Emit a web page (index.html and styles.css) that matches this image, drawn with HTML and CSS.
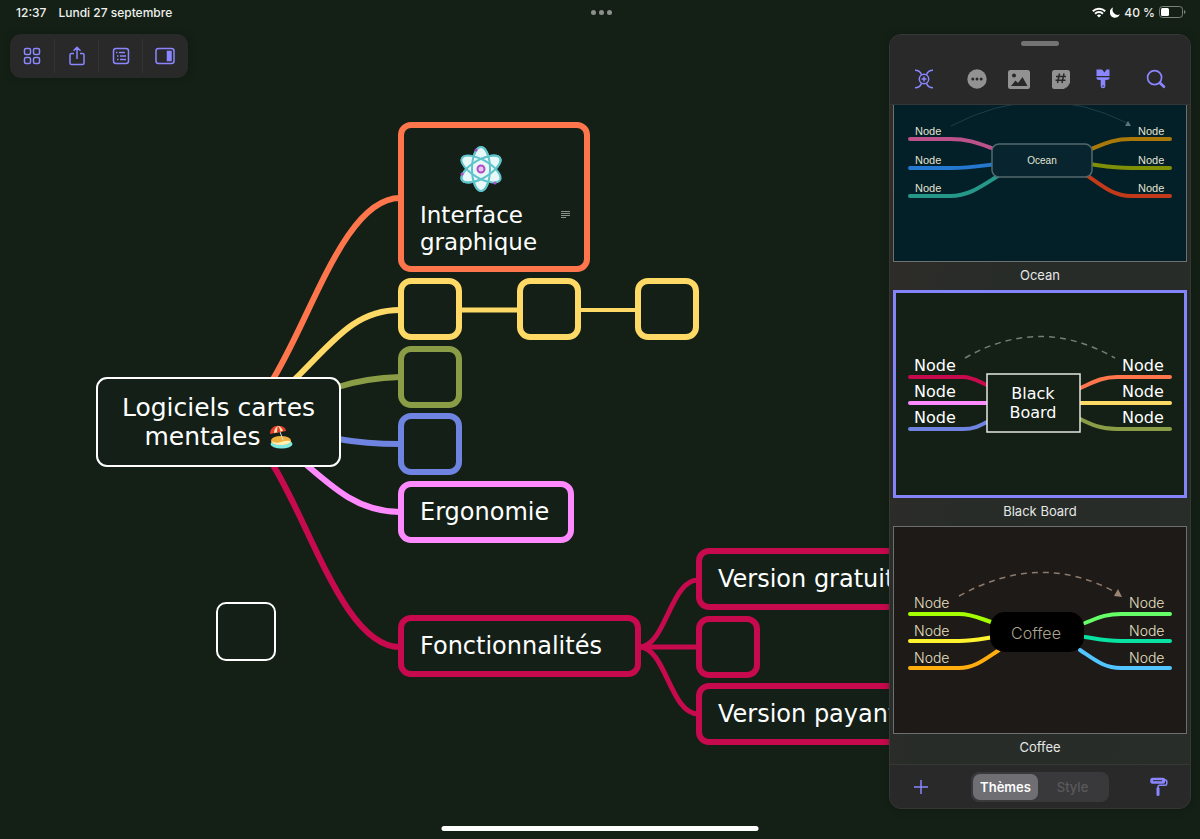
FILE: index.html
```html
<!DOCTYPE html>
<html lang="fr">
<head>
<meta charset="utf-8">
<title>Logiciels cartes mentales</title>
<link rel="stylesheet" href="styles.css">
</head>
<body>
<div class="app">
  <header class="status">
    <div class="status-side"><time>12:37</time><span>Lundi 27 septembre</span></div>
    <button class="dots" aria-label="Multitâche"><i></i><i></i><i></i></button>
    <div class="status-side status-end">
      <svg width="14" height="11" viewBox="0 0 14 11" fill="none" stroke="#fff" stroke-width="2"><path d="M.8 4.3a8.8 8.8 0 0 1 12.4 0M3.1 6.7a5.5 5.5 0 0 1 7.8 0"/><path d="M7 10.6 4.9 8.5a3 3 0 0 1 4.2 0z" fill="#fff" stroke="none"/></svg>
      <svg width="10" height="11" viewBox="0 0 10 11"><path d="M3.1.6A5.2 5.2 0 1 0 9.8 7.3 5 5 0 0 1 3.1.6z" fill="#fff"/></svg>
      <span>40 %</span>
      <svg width="27" height="12" viewBox="0 0 27 12"><rect x=".5" y=".5" width="23" height="11" rx="3" fill="none" stroke="#7b827c"/><rect x="2" y="2" width="8" height="8" rx="1.5" fill="#fff"/><path d="M25 4v4q1.5-.6 1.5-2T25 4z" fill="#7b827c"/></svg>
    </div>
  </header>

  <main class="canvas">
    <svg class="links" width="900" height="839" viewBox="0 0 900 839" fill="none" stroke-width="6">
      <path stroke="#ff764d" d="M270 384C310 322 344 198 400 198"/>
      <path stroke="#ffd966" d="M290 384C331 345 352 310 400 310"/>
      <path stroke="#8a9c45" d="M338 387Q366 378 400 377"/>
      <path stroke="#6f83e0" d="M338 439Q366 444 400 444"/>
      <path stroke="#ff8aff" d="M302 461C335 490 360 512 400 512"/>
      <path stroke="#c70a4d" d="M270 460C310 522 344 647 400 647"/>
      <path stroke="#ffd966" stroke-width="5" d="M460 310H519"/>
      <path stroke="#ffd966" stroke-width="4" d="M579 310H637"/>
      <path stroke="#c70a4d" stroke-width="5" d="M639 647C666 647 670 580 698 580M639 647H698M639 647C666 647 670 714 698 714"/>
    </svg>
    <div class="node root"><span>Logiciels cartes</span>
      <span class="root-line">mentales
        <svg width="24" height="24" viewBox="0 0 24 24" role="img" aria-label="plage"><ellipse cx="12.500" cy="19" rx="11" ry="4.500" fill="#7de8e0"/><ellipse cx="12" cy="15.500" rx="10" ry="4.500" fill="#efb13d"/><path d="M2 16q5 3 10 1t10-1q-2 4-10 4T2 16z" fill="#fff0b5"/><path d="m10 4 4 11" stroke="#d9dedb"/><path d="M1 9C1 3 6 0 10 1c4 0 7 2 7 5z" fill="#e63b2e"/><path d="M5 8C5 4 7 2 9 1c2 0 4 2 5 5z" fill="#ffe9a8"/><path d="M8 7.500C8 4 8.500 2 9 1c1 1 2 3 2.500 5.700z" fill="#e63b2e"/></svg>
      </span>
    </div>
    <div class="node orange">
      <svg class="atom" width="46" height="50" viewBox="-23 -25 46 50" role="img" aria-label="atome"><g fill="#e8f7f7" stroke="#5ec3ca" stroke-width="2"><ellipse rx="9" ry="22"/><ellipse rx="9" ry="22" transform="rotate(60)"/><ellipse rx="9" ry="22" transform="rotate(120)"/></g><g fill="none" stroke="#5ec3ca" stroke-width="2"><ellipse rx="9" ry="22"/><ellipse rx="9" ry="22" transform="rotate(60)"/></g><circle r="3.500" fill="#e7c6ef" stroke="#b04cc8" stroke-width="2"/><g fill="#b04cc8"><circle cx="-5" cy="-19" r="1.500"/><circle cx="-19" cy="5" r="1.500"/><circle cx="14" cy="14" r="1.500"/></g></svg>
      <div class="orange-text"><span>Interface<br>graphique</span>
        <svg class="note" width="9" height="8" viewBox="0 0 9 8" stroke="#8d948e"><path d="M0 .5h9M0 2.500h9M0 4.500h9M0 6.500h5"/></svg>
      </div>
    </div>
    <div class="node box yellow y1"></div>
    <div class="node box yellow y2"></div>
    <div class="node box yellow y3"></div>
    <div class="node box green"></div>
    <div class="node box blue"></div>
    <div class="node label pink"><span>Ergonomie</span></div>
    <div class="node label crimson features"><span>Fonctionnalités</span></div>
    <div class="node label crimson free"><span>Version gratuite</span></div>
    <div class="node box crimson extra"></div>
    <div class="node label crimson paid"><span>Version payante</span></div>
    <div class="node floating"></div>
  </main>

  <nav class="toolbar" aria-label="Document">
    <button aria-label="Documents"><svg width="18" height="18" viewBox="0 0 18 18"><rect x="1.500" y="1.500" width="6" height="6" rx="1.500"/><rect x="10.500" y="1.500" width="6" height="6" rx="1.500"/><rect x="1.500" y="10.500" width="6" height="6" rx="1.500"/><rect x="10.500" y="10.500" width="6" height="6" rx="1.500"/></svg></button>
    <button aria-label="Partager"><svg width="18" height="20" viewBox="0 0 18 20"><path d="M6 7.500H3.500q-1.500 0-1.500 1.500v8q0 1.500 1.500 1.500h11q1.500 0 1.500-1.500V9q0-1.500-1.500-1.500H12M9 13V1.500M5.500 4.800 9 1.300l3.500 3.500"/></svg></button>
    <button aria-label="Plan"><svg width="18" height="18" viewBox="0 0 18 18"><rect x="1.500" y="1.500" width="15" height="15" rx="2.500"/><path d="M4 5.500h1.500M7 5.500h6M5 9h1.500M8 9h6M5 12.500h1.500M8 12.500h6"/></svg></button>
    <button aria-label="Inspecteur"><svg width="20" height="18" viewBox="0 0 20 18"><rect x="1" y="1.500" width="18" height="15" rx="2.500"/><rect x="12.500" y="4.500" width="3.500" height="9" fill="#8a86ff"/></svg></button>
  </nav>

  <aside class="panel">
    <div class="grabber"></div>
    <div class="tabs">
      <button aria-label="Nœud"><svg width="20" height="20" viewBox="0 0 20 20"><circle cx="10" cy="10" r="4.700"/><path d="M1 1.200c4 0 5.500 1.500 6.500 4.500M19 1.200c-4 0-5.500 1.500-6.500 4.500M1 18.800c4 0 5.500-1.500 6.500-4.500M19 18.800c-4 0-5.500-1.500-6.500-4.500M10 7.500v5M7.500 10h5"/></svg></button>
      <div class="tab-group">
        <button aria-label="Plus"><svg width="20" height="20" viewBox="0 0 20 20" class="solid"><circle cx="10" cy="10" r="9.700"/><g class="cut"><circle cx="5.800" cy="10" r="1.500"/><circle cx="10" cy="10" r="1.500"/><circle cx="14.200" cy="10" r="1.500"/></g></svg></button>
        <button aria-label="Image"><svg width="22" height="19" viewBox="0 0 22 19" class="solid"><rect width="22" height="19" rx="2.500"/><g class="cut"><circle cx="6" cy="5.500" r="2"/><path d="M3 16l4.500-5.500 2.500 2.500L14.500 7 19.500 16z"/></g></svg></button>
        <button aria-label="Étiquette"><svg width="18" height="19" viewBox="0 0 18 19" class="solid"><path d="M2.500 0h13Q18 0 18 2.500V13l-6 6H2.500Q0 19 0 16.500v-14Q0 0 2.500 0z"/><path d="M13.500 18.500v-2.500q0-1.500 1.500-1.500h2.500z"/><path class="hash" d="M7.500 3.500 5.500 13M12 3.500 10 13M4 6.500H14M3.500 10.200H13.500"/></svg></button>
        <button aria-label="Apparence"><svg width="14" height="20" viewBox="0 0 14 20" class="violet"><path d="M.5.500H6L8.500 3.500 10.500.500h3v6.500H.5zM.5 8.200h13v.8q0 1.500-1.500 1.700L9.300 11v6a2.300 2.300 0 0 1-4.600 0v-6L2 10.700Q.5 10.500.5 9z"/><circle cx="7" cy="17" r=".8" fill="#292929"/></svg></button>
      </div>
      <button aria-label="Rechercher"><svg width="20" height="20" viewBox="0 0 20 20"><circle cx="8.600" cy="8.600" r="7" stroke-width="1.700"/><path d="m14 14 4 3.700" stroke-width="2.700" stroke-linecap="round"/></svg></button>
    </div>

    <div class="themes">
      <button class="theme">
        <svg class="thumb ocean" viewBox="0 0 294 208">
          <g fill="none" stroke="#1d3d47"><path d="M58 72Q147 25 234 69"/></g><path d="m232 72 3-5 3 5z" fill="#5c747a"/>
          <g fill="none" stroke-width="4" stroke-linecap="round"><path stroke="#bd528b" d="M17 85H57C77 85 87 90 104 96"/><path stroke="#2578d0" d="M17 114H58C75 114 87 112 104 110"/><path stroke="#25988a" d="M17 142H57C77 142 90 131 108 120"/><path stroke="#a97808" d="M277 85H238C220 85 211 90 196 96"/><path stroke="#7f9007" d="M277 114H238C220 114 211 112 196 110"/><path stroke="#c23a19" d="M277 142H238C220 142 208 131 192 120"/></g>
          <rect x="99" y="90" width="100" height="33" rx="7" fill="#08252f" stroke="#53686e" stroke-width="1.500"/>
          <g class="ocean-text"><text x="22" y="81">Node</text><text x="22" y="110">Node</text><text x="22" y="138">Node</text><text x="245" y="81">Node</text><text x="245" y="110">Node</text><text x="245" y="138">Node</text><text class="ocean-title" x="149" y="110" text-anchor="middle">Ocean</text></g>
        </svg><span>Ocean</span>
      </button>
      <button class="theme" aria-pressed="true">
        <svg class="thumb board" viewBox="0 0 294 208">
          <path d="M72 68Q147 25 222 68" fill="none" stroke="#747d76" stroke-width="1.500" stroke-dasharray="6 5"/>
          <g fill="none" stroke-width="4" stroke-linecap="round"><path stroke="#c70a4d" d="M17 87H70C80 87 86 92 96 96"/><path stroke="#ff8aff" d="M17 113H96"/><path stroke="#6f83e0" d="M17 139H70C82 139 88 135 96 131"/><path stroke="#ff764d" d="M277 87H224C208 87 199 93 185 99"/><path stroke="#ffd966" d="M277 113H185"/><path stroke="#8a9c45" d="M277 139H224C208 139 199 135 185 128"/></g>
          <rect x="94" y="84" width="93" height="58" fill="#142016" stroke="#e4e6e4" stroke-width="1.500"/>
          <g class="board-text"><text x="21" y="81">Node</text><text x="21" y="107">Node</text><text x="21" y="133">Node</text><text x="229" y="81">Node</text><text x="229" y="107">Node</text><text x="229" y="133">Node</text><g text-anchor="middle"><text x="140" y="109">Black</text><text x="140" y="128">Board</text></g></g>
        </svg><span>Black Board</span>
      </button>
      <button class="theme">
        <svg class="thumb coffee" viewBox="0 0 294 208">
          <path d="M66 70Q147 25 222 66" fill="none" stroke="#8e7a6b" stroke-width="1.500" stroke-dasharray="6 5"/><path d="m221 70 4-7 4 8z" fill="#9b8473"/>
          <g fill="none" stroke-width="4" stroke-linecap="round"><path stroke="#a5ff00" d="M17 88H66C80 88 88 93 101 97"/><path stroke="#fff32f" d="M17 115H66C80 115 88 113 101 111"/><path stroke="#ffae0d" d="M17 142H66C82 142 92 133 106 124"/><path stroke="#65ff68" d="M277 88H228C212 88 205 92 192 97"/><path stroke="#08e2a2" d="M277 115H228C212 115 205 113 192 111"/><path stroke="#52c4ff" d="M277 142H228C211 142 202 134 187 124"/></g>
          <rect x="97" y="86" width="94" height="40" rx="15" fill="#000"/>
          <g class="coffee-text"><text x="21" y="82">Node</text><text x="21" y="110">Node</text><text x="21" y="137">Node</text><text x="236" y="82">Node</text><text x="236" y="110">Node</text><text x="236" y="137">Node</text><text class="coffee-title" x="143" y="113" text-anchor="middle">Coffee</text></g>
        </svg><span>Coffee</span>
      </button>
    </div>

    <footer class="panel-foot">
      <button aria-label="Ajouter"><svg width="16" height="16" viewBox="0 0 16 16"><path d="M8 1v14M1 8h14"/></svg></button>
      <div class="segments"><button class="segment active">Thèmes</button><button class="segment" disabled>Style</button></div>
      <button aria-label="Appliquer"><svg width="18" height="20" viewBox="0 0 18 20"><rect x="1" y="1.500" width="13.500" height="4.500" rx="1.500" fill="#8a86ff"/><path d="M3 3.700h9" stroke="#292929" stroke-width="1"/><path d="M14.500 3h1q1.300 0 1.300 1.300v2.500q0 1.500-1.500 1.500H9.500Q8 8.300 8 9.800V11"/><path d="M8 11.500v6" stroke-width="3" stroke-linecap="round"/></svg></button>
    </footer>
  </aside>
  <div class="home-bar"></div>
</div>
</body>
</html>
```
FILE: styles.css
```css
* { box-sizing: border-box; }
body {
  margin: 0;
  background: #142016;
  color: #fff;
  font-family: Inter, "Liberation Sans", sans-serif;
}
button {
  display: flex;
  align-items: center;
  justify-content: center;
  margin: 0;
  padding: 0;
  border: 0;
  background: none;
  color: inherit;
  font: inherit;
}
svg { flex: none; }
.app { position: relative; min-height: 100vh; overflow: hidden; }

.status {
  position: relative;
  z-index: 1;
  display: grid;
  grid-template-columns: 1fr auto 1fr;
  align-items: center;
  height: 24px;
  padding: 0 14px 0 16px;
  color: #eef0ee;
  font-size: 12px;
  font-weight: 500;
}
.status-side { display: flex; align-items: center; gap: 12px; }
.status-end { justify-content: flex-end; gap: 4px; }
.dots { gap: 3px; }
.dots i { width: 5px; height: 5px; border-radius: 50%; background: #8b908c; }

/* Mind map */
.canvas { position: absolute; inset: 0; overflow: hidden; }
.links { position: absolute; left: 0; top: 0; }
.node {
  position: absolute;
  border: 6px solid;
  border-radius: 13px;
  background: #142017;
  font-family: "Chalkboard SE", "DejaVu Sans", sans-serif;
  font-size: 24px;
  line-height: 28px;
  white-space: nowrap;
}
.node span { color: #fff; }
.node.root {
  left: 96px; top: 377px;
  display: flex;
  flex-direction: column;
  align-items: center;
  padding: 14px 20px;
  min-width: 245px;
  border: 2px solid #fff;
  border-radius: 11px;
  font-size: 25px;
  line-height: 29px;
}
.root-line { display: flex; align-items: center; gap: 8px; }
.box { width: 64px; height: 62px; }
.label { height: 62px; padding: 11px 16px; }
.orange { left: 398px; top: 122px; min-width: 192px; padding: 16px 12px 10px 16px; border-color: #ff764d; }
.atom { display: block; margin: 0 auto 8px 38px; }
.orange-text { display: flex; justify-content: space-between; gap: 8px; }
.orange-text span { line-height: 27px; font-size: 23px; }
.note { margin: 9px 2px 0 0; }
.yellow { border-color: #ffd966; top: 278px; }
.y1 { left: 398px; }
.y2 { left: 517px; }
.y3 { left: 635px; }
.green { left: 398px; top: 346px; border-color: #8a9c45; }
.blue { left: 398px; top: 413px; border-color: #6f83e0; }
.pink { left: 398px; top: 481px; min-width: 176px; border-color: #ff8aff; }
.crimson { border-color: #c70a4d; }
.features { left: 398px; top: 615px; min-width: 243px; }
.free { left: 696px; top: 548px; }
.extra { left: 696px; top: 616px; }
.paid { left: 696px; top: 683px; }
.floating { left: 216px; top: 602px; width: 60px; height: 59px; border: 2px solid #fff; border-radius: 10px; }

.toolbar {
  position: absolute;
  left: 10px; top: 34px;
  display: flex;
  padding: 5px 1px 5px 0;
  border-radius: 11px;
  background: #292929;
  box-shadow: 0 0 8px #0004;
}
.toolbar button { width: 44px; height: 34px; }
.toolbar button + button { width: 44px; border-left: 1px solid #343434; }
.toolbar button:last-child { width: 45px; }
.toolbar svg, .tabs svg, .panel-foot svg { fill: none; stroke: #8a86ff; stroke-width: 1.5; }

/* Inspector */
.panel {
  position: absolute;
  top: 34px; right: 9px; bottom: 30px;
  display: flex;
  flex-direction: column;
  width: 302px;
  overflow: hidden;
  border: 1px solid #363836;
  border-radius: 12px;
  background: linear-gradient(100deg, #302c29, #272c28 40%, #282d29);
  box-shadow: 0 0 8px #0004;
}
.grabber { flex: none; height: 19px; padding: 6px 0 8px; background: #292929; }
.grabber::before { content: ""; display: block; width: 38px; height: 5px; margin: auto; border-radius: 3px; background: #737373; }
.tabs {
  flex: none;
  display: flex;
  justify-content: space-between;
  height: 51px;
  padding: 0 13px;
  border-bottom: 1px solid #353535;
  background: #292929;
}
.tab-group { display: flex; }
.tabs button { width: 42px; }
.tabs .solid { fill: #929292; stroke: none; }
.tabs .violet { fill: #8a86ff; stroke: none; }
.cut { fill: #292929; }
.tabs .hash { fill: none; stroke: #292929; stroke-width: 1.5; }
.themes {
  flex: 1;
  min-height: 0;
  display: flex;
  flex-direction: column;
  justify-content: flex-end;
  padding: 0 3px 2px;
  overflow: hidden;
}
.theme { flex: none; flex-direction: column; padding-bottom: 2px; color: #e6e7e6; font-size: 13px; line-height: 26px; }
.thumb { display: block; width: 100%; outline: 1px solid #6d706e; outline-offset: -1px; }
.theme[aria-pressed="true"] .thumb { outline: 3px solid #8383fa; outline-offset: -3px; }
.ocean { background: #032029; }
.board { background: #142016; }
.coffee { background: #1e1a18; }
.ocean-text { fill: #e5e4d1; font: 11px "Liberation Sans", sans-serif; }
.ocean-title { font-size: 10px; }
.board-text { fill: #fff; font: 16px "Chalkboard SE", "DejaVu Sans", sans-serif; }
.coffee-text { fill: #e8e2c5; font: 300 14px Inter, sans-serif; }
.coffee-title { fill: #aaa58e; font-size: 16px; }

.panel-foot {
  flex: none;
  display: flex;
  align-items: center;
  justify-content: space-between;
  height: 44px;
  padding: 0 10px;
  border-top: 1px solid #363836;
  background: #292929;
}
.panel-foot > button { width: 42px; height: 42px; }
.segments { display: flex; width: 138px; padding: 2px; border-radius: 8px; background: #39393b; }
.segment { flex: 1 1 0; height: 26px; border-radius: 7px; font-size: 13px; font-weight: 500; }
.segment.active { flex: none; width: 65px; background: #6e6e73; font-weight: 600; }
.segment:disabled { color: #59595b; }

.home-bar {
  position: absolute;
  left: 50%; bottom: 8px;
  width: 317px; height: 5px;
  border-radius: 3px;
  background: #fff;
  transform: translateX(-50%);
}
```
